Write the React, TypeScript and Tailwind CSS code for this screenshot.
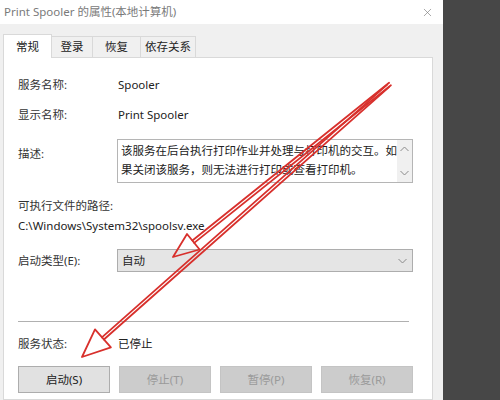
import { X } from "lucide-react";

const tabs = [
  { name: "常规", w: "w-[49px]", active: true },
  { name: "登录", w: "w-[41px]", active: false },
  { name: "恢复", w: "w-[48px]", active: false },
  { name: "依存关系", w: "w-[55px]", active: false },
];

const buttons = [
  { label: "启动(S)", enabled: true },
  { label: "停止(T)", enabled: false },
  { label: "暂停(P)", enabled: false },
  { label: "恢复(R)", enabled: false },
];

function Chevron({ up = false }: { up?: boolean }) {
  return (
    <svg width="9" height="6" viewBox="0 0 9 6" className="block">
      <path
        d={up ? "M0.5 5 L4.5 1 L8.5 5" : "M0.5 1 L4.5 5 L8.5 1"}
        fill="none"
        stroke="#8a8a8a"
        strokeWidth="1"
      />
    </svg>
  );
}

// red annotation arrows, drawn over the dialog
function Arrows() {
  const red = "#d8302c";
  return (
    <svg
      width="500"
      height="400"
      viewBox="0 0 500 400"
      className="absolute left-0 top-0 pointer-events-none"
    >
      <g fill="none" stroke={red} strokeWidth="1.8" strokeLinejoin="round" strokeLinecap="round">
        <line x1="390.9" y1="85.2" x2="194.2" y2="242.9" />
        <line x1="389.1" y1="82.8" x2="192.4" y2="240.5" />
        <polygon points="173,257 187,234 199.6,249.5" />
        <line x1="389" y1="87.1" x2="103.9" y2="339.5" />
        <line x1="387" y1="84.9" x2="101.9" y2="337.3" />
        <polygon points="82,357 95,329.4 110.9,347.4" />
      </g>
    </svg>
  );
}

export default function App() {
  return (
    <div className="relative flex w-[500px] h-[400px] overflow-hidden font-['Noto_Sans','Noto_Sans_CJK_SC',sans-serif] text-[11.5px] text-[#222]">
      <div className="w-[443px] flex flex-col bg-[#f0f0f0]">
        {/* title bar */}
        <div className="h-[24px] shrink-0 bg-white flex items-center justify-between pl-[4px] pr-[9px]">
          <span className="text-[#7a7a7a] text-[11.5px] leading-none">Print Spooler 的属性(本地计算机)</span>
          <X size={13} strokeWidth={1.2} color="#7a7a7a" />
        </div>

        {/* tabs */}
        <div className="h-[33px] shrink-0 flex items-end pl-[3px]">
          {tabs.map((t) =>
            t.active ? (
              <div
                key={t.name}
                className={`${t.w} h-[24px] -mb-px relative z-10 bg-white border border-b-0 border-[#d9d9d9] flex items-center justify-center`}
              >
                {t.name}
              </div>
            ) : (
              <div
                key={t.name}
                className={`${t.w} h-[21px] bg-[#f0f0f0] border border-l-0 border-b-0 border-[#d9d9d9] flex items-center justify-center`}
              >
                {t.name}
              </div>
            )
          )}
        </div>

        {/* panel */}
        <div className="ml-[3px] w-[430px] flex-1 bg-white border border-[#d9d9d9] pl-[14px] leading-[18px]">
          <div className="flex mt-[18px]">
            <span className="w-[100px] text-[#333]">服务名称:</span>
            <span>Spooler</span>
          </div>
          <div className="flex mt-[12px]">
            <span className="w-[100px] text-[#333]">显示名称:</span>
            <span>Print Spooler</span>
          </div>
          <div className="flex mt-[15px]">
            <span className="w-[99px] pt-[6px] text-[#333]">描述:</span>
            <div className="w-[296px] h-[44px] border border-[#b5b5b5] flex">
              <div className="flex-1 pl-[3px] pt-[1px] leading-[19px] whitespace-nowrap">
                <div>该服务在后台执行打印作业并处理与打印机的交互。如</div>
                <div>果关闭该服务，则无法进行打印或查看打印机。</div>
              </div>
              <div className="w-[16px] bg-[#f0f0f0] flex flex-col items-center justify-between py-[6px]">
                <Chevron up />
                <Chevron />
              </div>
            </div>
          </div>
          <div className="mt-[14px] text-[#333]">可执行文件的路径:</div>
          <div className="mt-[2px]">C:\Windows\System32\spoolsv.exe</div>
          <div className="flex items-center mt-[14px]">
            <span className="w-[99px] text-[#333]">启动类型(E):</span>
            <div className="w-[296px] h-[23px] bg-[#e5e5e5] border border-[#adadad] flex items-center justify-between pl-[4px] pr-[5px]">
              <span>自动</span>
              <Chevron />
            </div>
          </div>
          <div className="mt-[49px] w-[391px] h-px bg-[#b0b0b0]" />
          <div className="flex mt-[13px]">
            <span className="w-[100px] text-[#333]">服务状态:</span>
            <span>已停止</span>
          </div>
          <div className="flex gap-[9px] mt-[13px]">
            {buttons.map((b) => (
              <div
                key={b.label}
                className={
                  b.enabled
                    ? "w-[92px] h-[27px] bg-[#e1e1e1] border border-[#adadad] flex items-center justify-center text-[#222]"
                    : "w-[92px] h-[27px] bg-[#cccccc] border border-[#c4c4c4] flex items-center justify-center text-[#9a9a9a]"
                }
              >
                {b.label}
              </div>
            ))}
          </div>
        </div>
      </div>
      <div className="flex-1 bg-[#474747]" />
      <Arrows />
    </div>
  );
}
